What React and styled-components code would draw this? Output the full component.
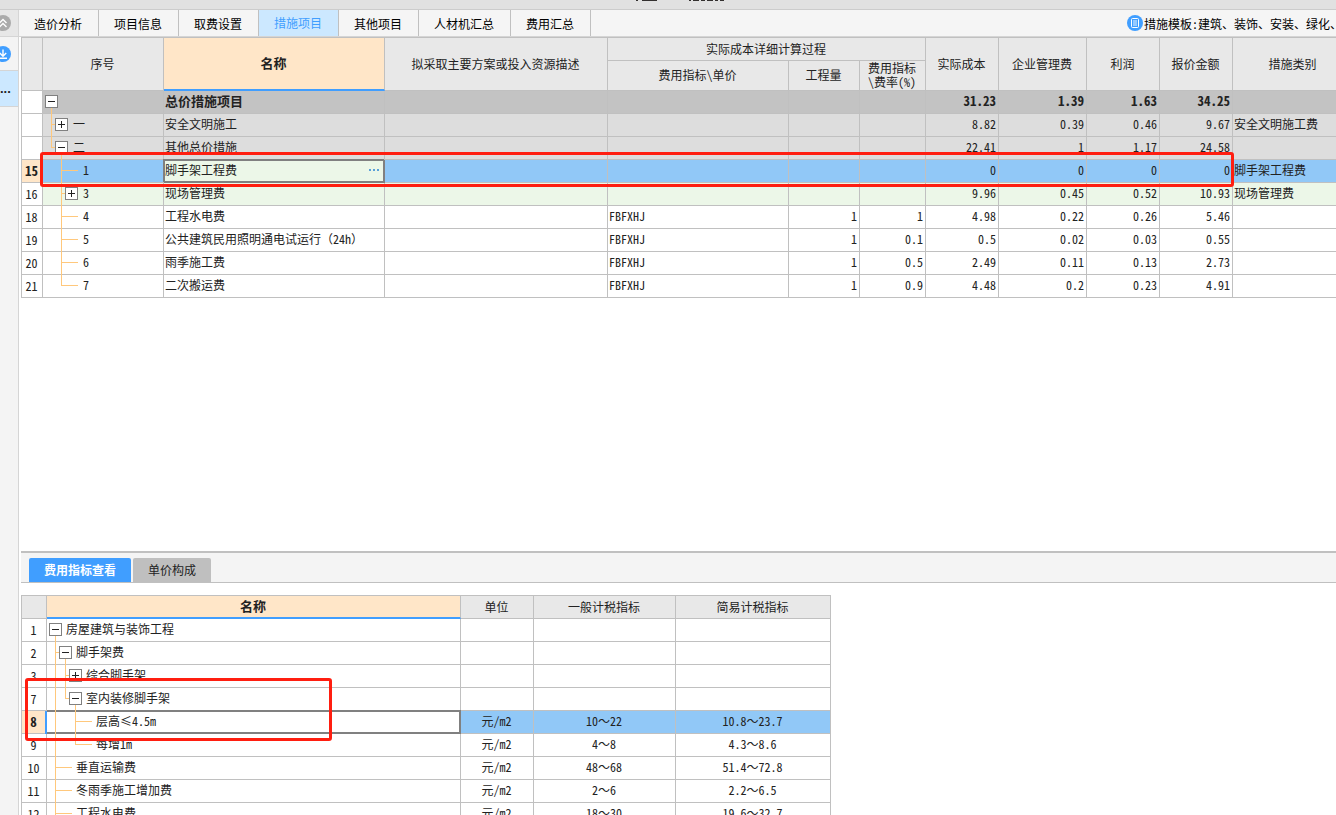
import styled, { createGlobalStyle, css } from 'styled-components'

const GlobalStyle = createGlobalStyle`
	* {
		box-sizing: border-box;
	}
	body {
		margin: 0;
		background: #ffffff;
		color: #222222;
		font-family: 'Noto Sans CJK SC', 'Noto Sans', sans-serif;
		font-size: 12px;
		line-height: 16px;
	}
	button {
		font: inherit;
		color: inherit;
		border: 0;
		padding: 0;
		background: none;
	}
`

const line = '#c0c0c0'
const blue = '#409eff'

const Page = styled.div`
	display: flex;
	flex-direction: column;
	height: 100vh;
	overflow: hidden;
`

const TitleBar = styled.header`
	flex: none;
	display: flex;
	justify-content: center;
	height: 10px;
	padding-left: 24px;
	overflow: hidden;
	background: #e1e1e1;
	border-bottom: 1px solid #cccccc;
`

const Body = styled.div`
	flex: 1;
	display: flex;
	min-height: 0;
`

const Sidebar = styled.aside`
	flex: none;
	width: 19px;
	background: #f4f4f4;
	border-right: 1px solid #d5d5d5;
`

const SideButton = styled.button`
	display: flex;
	align-items: center;
	width: 100%;
	height: ${(p) => p.$height}px;
	overflow: hidden;
	background: ${(p) => p.$bg || 'transparent'};
	border-bottom: 1px solid #d5d5d5;
	font-family: 'Liberation Sans', sans-serif;
	font-size: 13px;
	font-weight: 700;
	svg {
		flex: none;
		margin-left: -5px;
	}
`

const Main = styled.main`
	flex: 1;
	display: flex;
	flex-direction: column;
	min-width: 0;
`

const TabBar = styled.nav`
	flex: none;
	display: flex;
	height: 27px;
	background: #f5f5f5;
	border-bottom: 1px solid #d5d5d5;
`

const Tab = styled.button`
	padding: ${(p) => (p.$active ? 0 : 2)}px 16px 0 15px;
	border-right: 1px solid ${line};
	color: ${(p) => (p.$active ? blue : '#000000')};
	background: ${(p) => (p.$active ? '#cce8ff' : 'transparent')};
`

const Template = styled.div`
	flex: none;
	display: flex;
	align-items: center;
	width: 209px;
	margin-left: auto;
	gap: 1px;
	overflow: hidden;
	white-space: nowrap;
	color: #000000;
	font-feature-settings: 'hwid';
	svg {
		flex: none;
	}
`

const TemplateText = styled.span`
	padding-top: 2px;
`

const TopPane = styled.section`
	position: relative;
	flex: none;
	height: 516px;
	margin-left: 2px;
	overflow: hidden;
	border-bottom: 2px solid ${line};
`

const BottomPane = styled.section`
	position: relative;
	flex: 1;
	margin-left: 2px;
	min-height: 0;
	overflow: hidden;
`

const DetailTabs = styled.nav`
	display: flex;
	align-items: flex-end;
	gap: 2px;
	height: 30px;
	padding-left: 8px;
	margin-bottom: 12px;
	background: #f4f4f4;
	border-bottom: 1px solid ${line};
`

const DetailTab = styled.button`
	height: 24px;
	padding: 0 15px;
	border-radius: 2px 2px 0 0;
	color: ${(p) => (p.$active ? '#ffffff' : '#222222')};
	font-weight: ${(p) => (p.$active ? 700 : 400)};
	background: ${(p) => (p.$active ? blue : '#bfbfbf')};
`

const Grid = styled.table`
	table-layout: fixed;
	width: ${(p) => p.$width}px;
	border-collapse: separate;
	border-spacing: 0;
	border-top: 1px solid ${line};
	border-left: 1px solid ${line};
	font-feature-settings: 'hwid';
`

const Th = styled.th`
	height: ${(p) => p.$height || 23}px;
	padding: 0 1px 1px 0;
	border-right: 1px solid ${line};
	border-bottom: 1px solid ${line};
	background: #e8e8e8;
	font-weight: 400;
	line-height: 14px;
	${(p) =>
		p.$current &&
		css`
			background: #ffe6c8;
			border-bottom: 2px solid ${blue};
			font-size: 13px;
			font-weight: 700;
		`}
`

const tones = {
	total: '#c3c3c3',
	group: '#dddddd',
	selected: '#91c8f7',
	green: '#ecf7e8',
	plain: '#ffffff',
}

const Row = styled.tr`
	background: ${(p) => tones[p.$tone || 'plain']};
	font-size: ${(p) => (p.$tone === 'total' ? 13 : 12)}px;
	font-weight: ${(p) => (p.$tone === 'total' ? 700 : 400)};
`

const Td = styled.td`
	height: 23px;
	padding: 0 2px 2px 1px;
	border-right: 1px solid ${line};
	border-bottom: 1px solid ${line};
	text-align: ${(p) => p.$align || 'left'};
	line-height: 16px;
	white-space: nowrap;
`

const IndexCell = styled(Td)`
	padding: 0 1px 0 0;
	text-align: center;
	font-size: ${(p) => (p.$current ? 13 : 12)}px;
	font-weight: ${(p) => (p.$current ? 700 : 400)};
	background: ${(p) => (p.$current ? '#ffe6c8' : '#ffffff')};
`

const TreeCell = styled(Td)`
	padding: 0;
	${(p) =>
		p.$focus &&
		css`
			background: #ffffff;
			box-shadow: inset 0 1px 0 #808080, inset 0 -1px 0 #808080, inset -1px 0 0 #808080, 0 -1px 0 #808080, -2px 0 0 ${blue};
			border-color: #808080;
		`}
`

const TreeLine = styled.div`
	display: flex;
	align-items: center;
	height: 22px;
	svg {
		flex: none;
		margin-bottom: -1px;
	}
`

const TreeText = styled.span`
	padding-bottom: 2px;
`

// full-width punctuation keeps its own width next to the half-width digits
const Wide = styled.span`
	font-feature-settings: normal;
`

const EditCell = styled(Td)`
	padding: 0 3px 2px 0;
	background: #ecf7e8;
	border-color: #808080;
	box-shadow: inset 1px 1px 0 #808080, inset -1px -1px 0 #808080, -1px -1px 0 #808080;
`

const EditBox = styled.div`
	display: flex;
	align-items: center;
	justify-content: space-between;
`

const NameInput = styled.input`
	width: 180px;
	height: 16px;
	padding: 0 0 0 1px;
	border: 0;
	outline: 0;
	background: transparent;
	color: inherit;
	font: inherit;
`

const MoreButton = styled.button`
	display: flex;
`

// red annotation frames drawn over the grids
const Mark = styled.div`
	position: absolute;
	border: 3px solid #ff1e10;
	border-radius: 3px;
	pointer-events: none;
`

const TopMark = styled(Mark)`
	top: 115px;
	left: 19px;
	width: 1194px;
	height: 35px;
`

const BottomMark = styled(Mark)`
	top: 125px;
	left: 4px;
	width: 307px;
	height: 63px;
`

/* one row's slice of the tree: guides are vertical lines, `at` is the x of the branch */
function Branch({ guides = [], at, end, box, child, width }) {
	return (
		<svg width={width} height='23' viewBox={`0 0 ${width} 23`} shapeRendering='crispEdges'>
			<g stroke='#ffc87c' fill='none'>
				{guides.map((x) => (
					<path key={x} d={`M${x + 0.5} 0V23`} />
				))}
				{at != null && <path d={`M${at + 0.5} 0V${end ? 11 : 23}M${at} 10.5H${box ? box.x : at + 17}`} />}
				{child != null && <path d={`M${child + 0.5} 17V23`} />}
			</g>
			{box && (
				<g stroke='#808080'>
					<rect x={box.x + 0.5} y='4.5' width='12' height='12' fill='#ffffff' />
					<path d={`M${box.x + 3} 10.5H${box.x + 10}`} stroke='#222222' />
					{box.plus && <path d={`M${box.x + 6.5} 7V14`} stroke='#222222' />}
				</g>
			)}
		</svg>
	)
}

// lower edge of the window caption
function CaptionEdge() {
	return (
		<svg width='89' height='1' viewBox='0 0 89 1' aria-hidden='true' shapeRendering='crispEdges'>
			<path d='M0 .5h2M6 .5h15M53 .5h2M57 .5h6M65 .5h4M71 .5h6M79 .5h3M84 .5h4' stroke='#33302f' />
		</svg>
	)
}

function UpIcon() {
	return (
		<svg width='16' height='16' viewBox='0 0 16 16'>
			<circle cx='8' cy='8' r='8' fill='#ababab' />
			<path d='M4.5 8L8 4.5 11.5 8M4.5 12L8 8.5 11.5 12' fill='none' stroke='#ffffff' strokeWidth='1.4' />
		</svg>
	)
}

function DownloadIcon() {
	return (
		<svg width='16' height='16' viewBox='0 0 16 16'>
			<circle cx='8' cy='8' r='8' fill={blue} />
			<path d='M8 3.5v6.5M4.8 7L8 10.2 11.2 7M4 12.3h8' fill='none' stroke='#ffffff' strokeWidth='1.4' />
		</svg>
	)
}

function TemplateIcon() {
	return (
		<svg width='16' height='16' viewBox='0 0 16 16'>
			<circle cx='8' cy='8' r='8' fill={blue} />
			<rect x='4.5' y='3.5' width='7' height='9' rx='1' fill='none' stroke='#ffffff' />
			<path d='M6 6h4M6 8h4M6 10h4' stroke='#ffffff' strokeWidth='0.9' />
		</svg>
	)
}

const tabs = ['造价分析', '项目信息', '取费设置', '措施项目', '其他项目', '人材机汇总', '费用汇总']
const costCols = [21, 121, 221, 223, 181, 71, 66, 73, 88, 73, 73, 121]
const indexCols = [25, 414, 73, 142, 155]

const costRows = [
	{ tone: 'total', tree: { box: { x: 2 }, child: 8, width: 17 }, code: '', name: '总价措施项目', cells: ['', '', '', '', '31.23', '1.39', '1.63', '34.25', ''] },
	{ tone: 'group', tree: { at: 8, box: { x: 12, plus: true }, width: 30 }, code: '一', name: '安全文明施工', cells: ['', '', '', '', '8.82', '0.39', '0.46', '9.67', '安全文明施工费'] },
	{ tone: 'group', tree: { at: 8, end: true, box: { x: 12 }, child: 18, width: 30 }, code: '二', name: '其他总价措施', cells: ['', '', '', '', '22.41', '1', '1.17', '24.58', ''] },
	{ no: 15, tone: 'selected', tree: { at: 18, width: 40 }, code: '1', name: '脚手架工程费', cells: ['', '', '', '', '0', '0', '0', '0', '脚手架工程费'] },
	{ no: 16, tone: 'green', tree: { at: 18, box: { x: 22, plus: true }, width: 40 }, code: '3', name: '现场管理费', cells: ['', '', '', '', '9.96', '0.45', '0.52', '10.93', '现场管理费'] },
	{ no: 18, tree: { at: 18, width: 40 }, code: '4', name: '工程水电费', cells: ['', 'FBFXHJ', '1', '1', '4.98', '0.22', '0.26', '5.46', ''] },
	{ no: 19, tree: { at: 18, width: 40 }, code: '5', name: '公共建筑民用照明通电试运行（24h）', cells: ['', 'FBFXHJ', '1', '0.1', '0.5', '0.02', '0.03', '0.55', ''] },
	{ no: 20, tree: { at: 18, width: 40 }, code: '6', name: '雨季施工费', cells: ['', 'FBFXHJ', '1', '0.5', '2.49', '0.11', '0.13', '2.73', ''] },
	{ no: 21, tree: { at: 18, end: true, width: 40 }, code: '7', name: '二次搬运费', cells: ['', 'FBFXHJ', '1', '0.9', '4.48', '0.2', '0.23', '4.91', ''] },
]

const indexRows = [
	{ no: 1, tree: { box: { x: 2 }, child: 8, width: 19 }, name: '房屋建筑与装饰工程', cells: ['', '', ''] },
	{ no: 2, tree: { at: 8, box: { x: 12 }, child: 18, width: 29 }, name: '脚手架费', cells: ['', '', ''] },
	{ no: 3, tree: { guides: [8], at: 18, box: { x: 22, plus: true }, width: 39 }, name: '综合脚手架', cells: ['', '', ''] },
	{ no: 7, tree: { guides: [8], at: 18, end: true, box: { x: 22 }, child: 28, width: 39 }, name: '室内装修脚手架', cells: ['', '', ''] },
	{ no: 8, selected: true, tree: { guides: [8], at: 28, width: 49 }, name: '层高≤4.5m', cells: ['元/m2', '10～22', '10.8～23.7'] },
	{ no: 9, tree: { guides: [8], at: 28, end: true, width: 49 }, name: '每增1m', cells: ['元/m2', '4～8', '4.3～8.6'] },
	{ no: 10, tree: { at: 8, width: 29 }, name: '垂直运输费', cells: ['元/m2', '48～68', '51.4～72.8'] },
	{ no: 11, tree: { at: 8, width: 29 }, name: '冬雨季施工增加费', cells: ['元/m2', '2～6', '2.2～6.5'] },
	{ no: 12, tree: { at: 8, width: 29 }, name: '工程水电费', cells: ['元/m2', '18～30', '19.6～32.7'] },
]

function mixed(text) {
	return text.split(/([～（）])/).map((part, i) => (i % 2 ? <Wide key={i}>{part}</Wide> : part))
}

function Cols({ widths }) {
	return (
		<colgroup>
			{widths.map((w, i) => (
				<col key={i} style={{ width: w }} />
			))}
		</colgroup>
	)
}

function CostTable() {
	return (
		<Grid $width={1333}>
			<Cols widths={costCols} />
			<thead>
				<tr>
					<Th rowSpan='2' />
					<Th rowSpan='2'>序号</Th>
					<Th rowSpan='2' $current>
						名称
					</Th>
					<Th rowSpan='2'>拟采取主要方案或投入资源描述</Th>
					<Th colSpan='3'>实际成本详细计算过程</Th>
					<Th rowSpan='2'>实际成本</Th>
					<Th rowSpan='2'>企业管理费</Th>
					<Th rowSpan='2'>利润</Th>
					<Th rowSpan='2'>报价金额</Th>
					<Th rowSpan='2'>措施类别</Th>
				</tr>
				<tr>
					<Th $height={30}>费用指标\单价</Th>
					<Th $height={30}>工程量</Th>
					<Th $height={30}>
						费用指标
						<br />
						\费率(%)
					</Th>
				</tr>
			</thead>
			<tbody>
				{costRows.map((row) => (
					<Row key={row.name} $tone={row.tone}>
						<IndexCell $current={row.tone === 'selected'}>{row.no}</IndexCell>
						<TreeCell>
							<TreeLine>
								<Branch {...row.tree} />
								<TreeText>{row.code}</TreeText>
							</TreeLine>
						</TreeCell>
						{row.tone === 'selected' ? (
							<EditCell>
								<EditBox>
									<NameInput aria-label='名称' defaultValue={row.name} />
									<MoreButton aria-label='更多'>
										<svg width='12' height='4' viewBox='0 0 12 4'>
											<path d='M0 1h2v2H0zM4 1h2v2H4zM8 1h2v2H8z' fill='#5aa0d8' />
										</svg>
									</MoreButton>
								</EditBox>
							</EditCell>
						) : (
							<Td>{mixed(row.name)}</Td>
						)}
						{row.cells.map((cell, i) => (
							<Td key={i} $align={i > 1 && i < 8 ? 'right' : 'left'}>
								{cell}
							</Td>
						))}
					</Row>
				))}
			</tbody>
		</Grid>
	)
}

function IndexTable() {
	return (
		<Grid $width={810}>
			<Cols widths={indexCols} />
			<thead>
				<tr>
					<Th />
					<Th $current>名称</Th>
					<Th>单位</Th>
					<Th>一般计税指标</Th>
					<Th>简易计税指标</Th>
				</tr>
			</thead>
			<tbody>
				{indexRows.map((row) => (
					<Row key={row.no} $tone={row.selected ? 'selected' : 'plain'}>
						<IndexCell $current={row.selected}>{row.no}</IndexCell>
						<TreeCell $focus={row.selected}>
							<TreeLine>
								<Branch {...row.tree} />
								<TreeText>{row.name}</TreeText>
							</TreeLine>
						</TreeCell>
						{row.cells.map((cell, i) => (
							<Td key={i} $align='center'>
								{mixed(cell)}
							</Td>
						))}
					</Row>
				))}
			</tbody>
		</Grid>
	)
}

function App() {
	return (
		<Page>
			<GlobalStyle />
			<TitleBar>
				<CaptionEdge />
			</TitleBar>
			<Body>
				<Sidebar>
					<SideButton $height={27} $bg='#e7e7e7' aria-label='收起'>
						<UpIcon />
					</SideButton>
					<SideButton $height={34} aria-label='导入'>
						<DownloadIcon />
					</SideButton>
					<SideButton $height={36} $bg='#cce8ff'>
						...
					</SideButton>
				</Sidebar>
				<Main>
					<TabBar>
						{tabs.map((tab) => (
							<Tab key={tab} $active={tab === '措施项目'}>
								{tab}
							</Tab>
						))}
						<Template>
							<TemplateIcon />
							<TemplateText>措施模板:建筑、装饰、安装、绿化、</TemplateText>
						</Template>
					</TabBar>
					<TopPane>
						<CostTable />
						<TopMark />
					</TopPane>
					<BottomPane>
						<DetailTabs>
							<DetailTab $active>费用指标查看</DetailTab>
							<DetailTab>单价构成</DetailTab>
						</DetailTabs>
						<IndexTable />
						<BottomMark />
					</BottomPane>
				</Main>
			</Body>
		</Page>
	)
}

export default App
